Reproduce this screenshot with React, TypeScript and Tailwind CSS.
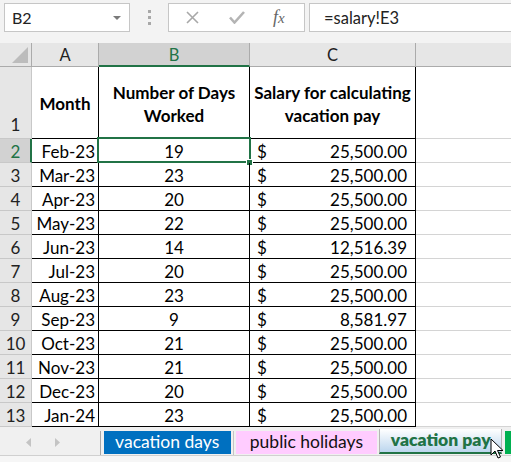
import React from 'react';

const rows = [
  { n: 2, month: 'Feb-23', days: '19', salary: '25,500.00' },
  { n: 3, month: 'Mar-23', days: '23', salary: '25,500.00' },
  { n: 4, month: 'Apr-23', days: '20', salary: '25,500.00' },
  { n: 5, month: 'May-23', days: '22', salary: '25,500.00' },
  { n: 6, month: 'Jun-23', days: '14', salary: '12,516.39' },
  { n: 7, month: 'Jul-23', days: '20', salary: '25,500.00' },
  { n: 8, month: 'Aug-23', days: '23', salary: '25,500.00' },
  { n: 9, month: 'Sep-23', days: '9', salary: '8,581.97' },
  { n: 10, month: 'Oct-23', days: '21', salary: '25,500.00' },
  { n: 11, month: 'Nov-23', days: '21', salary: '25,500.00' },
  { n: 12, month: 'Dec-23', days: '20', salary: '25,500.00' },
  { n: 13, month: 'Jan-24', days: '23', salary: '25,500.00' },
];

const font = { fontFamily: 'Lato, "Liberation Sans", sans-serif' };

const FormulaBar = () => (
  <div className="h-[43px] bg-[#f3f3f3] flex items-start pt-[3px] pl-[4px] shrink-0">
    <div className="w-[126px] h-[29px] bg-white border border-[#c6c6c6] flex items-center pl-[7px] pr-[8px] pt-[1px] justify-between">
      <span className="text-[16px] text-[#222]">B2</span>
      <svg width="8" height="4" viewBox="0 0 8 4">
        <path d="M0 0 L8 0 L4 4 Z" fill="#7a7a7a" />
      </svg>
    </div>
    <div className="w-[38px] h-[29px] flex flex-col items-center justify-center gap-[3px]">
      <div className="w-[3px] h-[3px] bg-[#a8a8a8]" />
      <div className="w-[3px] h-[3px] bg-[#a8a8a8]" />
      <div className="w-[3px] h-[3px] bg-[#a8a8a8]" />
    </div>
    <div className="w-[137px] h-[29px] bg-white border border-[#c6c6c6] flex items-center">
      <svg className="ml-[17px]" width="13" height="13" viewBox="0 0 13 13">
        <path d="M1 1 L12 12 M12 1 L1 12" stroke="#a8a8a8" strokeWidth="1.6" />
      </svg>
      <svg className="ml-[30px]" width="16" height="13" viewBox="0 0 16 13">
        <path d="M1 6.5 L5.5 11.5 L15 1" stroke="#b4b4b4" strokeWidth="2.6" fill="none" />
      </svg>
      <span
        className="ml-[28px] text-[18px] italic text-[#666]"
        style={{ fontFamily: '"Liberation Serif", serif' }}
      >
        f<span className="text-[15px]">x</span>
      </span>
    </div>
    <div className="flex-1 ml-[4px] h-[29px] bg-white border border-[#c6c6c6] border-r-0 flex items-center pl-[14px] pt-[1px]">
      <span className="text-[16.5px] text-[#222]">=salary!E3</span>
    </div>
  </div>
);

const ColumnHeaders = () => (
  <div className="flex h-[24px] shrink-0 text-[16.5px] text-[#222]">
    <div className="w-[32px] bg-[#e6e6e6] border-r border-b border-[#ababab] flex items-end justify-end pr-[3px] pb-[3px]">
      <svg width="16" height="16" viewBox="0 0 16 16">
        <path d="M16 0 L16 16 L0 16 Z" fill="#bcbcbc" />
      </svg>
    </div>
    <div className="w-[67px] bg-[#e6e6e6] border-r border-b border-[#ababab] flex items-center justify-center pt-[2px]">
      A
    </div>
    <div className="w-[151px] bg-[#d2d2d2] border-r border-[#ababab] border-b-2 border-b-[#217346] flex items-center justify-center pt-[3px] text-[#217346]">
      B
    </div>
    <div className="w-[166px] bg-[#e6e6e6] border-r border-b border-[#ababab] flex items-center justify-center pt-[2px]">
      C
    </div>
    <div className="flex-1 bg-[#e6e6e6] border-b border-[#ababab]" />
  </div>
);

const Grid = () => (
  <div className="flex flex-col text-[17px] text-black bg-white">
    <div className="flex h-[72px]">
      <div className="w-[32px] bg-[#e6e6e6] border-r border-b border-[#c8c8c8] flex items-end justify-center pb-[1px] text-[#222]">
        1
      </div>
      <div className="w-[67px] border-r border-b border-black flex items-center justify-center pt-[2px] font-bold">
        Month
      </div>
      <div className="w-[151px] border-r border-b border-black flex items-center justify-center pt-[2px] text-center font-bold leading-[23px]">
        Number of Days
        <br />
        Worked
      </div>
      <div className="w-[166px] border-r border-b border-black flex items-center justify-center pt-[2px] text-center font-bold leading-[23px]">
        Salary for calculating
        <br />
        vacation pay
      </div>
      <div className="flex-1 border-b border-[#d4d4d4]" />
    </div>
    {rows.map((r) => {
      const sel = r.n === 2;
      return (
        <div key={r.n} className="flex h-[24px]">
          <div
            className={
              sel
                ? 'w-[32px] bg-[#d2d2d2] border-r-2 border-r-[#217346] border-b border-[#c8c8c8] flex items-center justify-center pl-[1px] pt-[2px] text-[#217346]'
                : 'w-[32px] bg-[#e6e6e6] border-r border-b border-[#c8c8c8] flex items-center justify-center pt-[2px] text-[#222]'
            }
          >
            {r.n}
          </div>
          <div className="w-[67px] border-r border-b border-black flex items-center justify-end pr-[3px] pt-[2px]">
            {r.month}
          </div>
          <div className="relative w-[151px] border-r border-b border-black flex items-center justify-center pt-[2px]">
            {r.days}
            {sel && (
              <>
                <div className="absolute -left-[2px] -top-[2px] -right-[2px] -bottom-[1px] border-2 border-[#217346]" />
                <div className="absolute -right-[4px] -bottom-[4px] w-[7px] h-[7px] bg-[#217346] border border-white" />
              </>
            )}
          </div>
          <div className="w-[166px] border-r border-b border-black flex items-center justify-between pl-[7px] pr-[8px] pt-[2px]">
            <span>$</span>
            <span>{r.salary}</span>
          </div>
          <div className="flex-1 border-b border-[#d4d4d4]" />
        </div>
      );
    })}
  </div>
);

const TabBar = () => (
  <div className="relative flex flex-col shrink-0">
    <div className="h-[29px] bg-[#f0f0f0] flex items-start pt-[4px] border-b border-[#d0d0d0]">
      <div className="w-[100px] h-[23px] flex items-center">
        <svg className="ml-[26px]" width="5" height="9" viewBox="0 0 5 9">
          <path d="M5 0 L5 9 L0 4.5 Z" fill="#c4c4c4" />
        </svg>
        <svg className="ml-[24px]" width="5" height="9" viewBox="0 0 5 9">
          <path d="M0 0 L0 9 L5 4.5 Z" fill="#c4c4c4" />
        </svg>
      </div>
      <div className="w-[1px] h-[24px] bg-[#a8a8a8]" />
      <div className="ml-[3px] w-[127px] h-[23px] bg-[#0070c0] text-white flex items-center justify-center text-[17.5px]">
        vacation days
      </div>
      <div className="ml-[2px] w-[1px] h-[24px] bg-[#c4c4c4]" />
      <div className="ml-[2px] w-[142px] h-[23px] bg-[#ffccff] text-[#111] flex items-center justify-center text-[17.5px]">
        public holidays
      </div>
      <div className="ml-[2px] -mt-[2px] w-[123px] h-[25px] bg-gradient-to-b from-white to-[#bcd6ee] border-x border-[#b4b4b4] border-b-2 border-b-[#217346] text-[#217346] flex items-center justify-center font-extrabold text-[17.5px]">
        vacation pay
      </div>
      <div className="ml-[3px] w-[6px] h-[23px] bg-[#00b050]" />
    </div>
    <div className="h-[6px] bg-[#f6f6f6]" />
    <svg
      className="absolute left-[490px] top-[11px]"
      width="14"
      height="22"
      viewBox="0 0 14 22"
    >
      <path
        d="M1 1 L1 17 L5 13 L8 20 L10.5 19 L7.5 12.5 L13 12.5 Z"
        fill="white"
        stroke="black"
        strokeWidth="1"
        strokeLinejoin="round"
      />
    </svg>
  </div>
);

export default function App() {
  return (
    <div className="w-[511px] h-[463px] overflow-hidden flex flex-col bg-white" style={font}>
      <FormulaBar />
      <ColumnHeaders />
      <Grid />
      <TabBar />
    </div>
  );
}
